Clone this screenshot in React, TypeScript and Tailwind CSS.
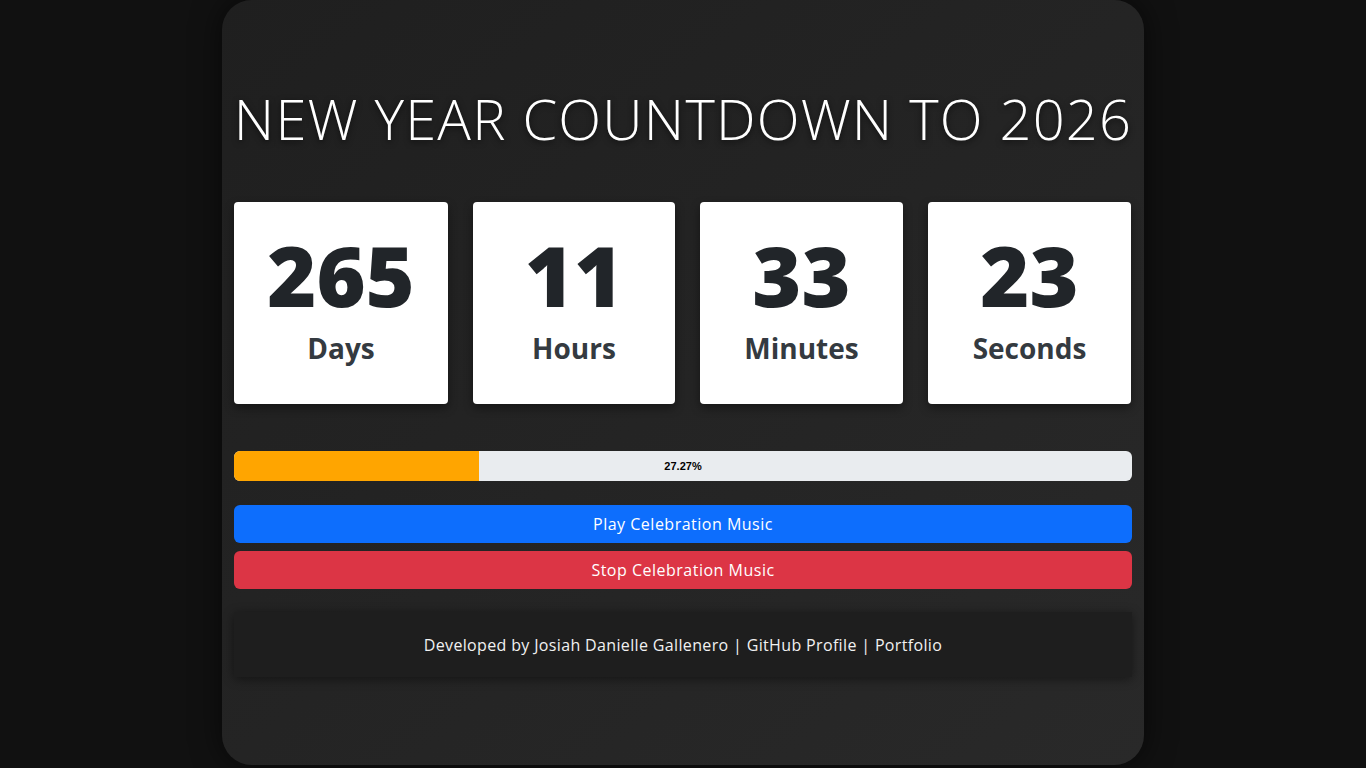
import React from 'react';

const units = [
  { value: '265', label: 'Days', w: 'w-[214px]' },
  { value: '11', label: 'Hours', w: 'w-[202px]' },
  { value: '33', label: 'Minutes', w: 'w-[203px]' },
  { value: '23', label: 'Seconds', w: 'w-[203px]' },
];

const App = () => {
  const progress = 27.27;

  return (
    <div className="min-h-screen bg-[#111111] flex justify-center font-['Open_Sans',sans-serif]">
      <div className="w-[922px] h-[765px] rounded-[30px] bg-gradient-to-br from-[#1f1f1f] to-[#292929] shadow-[0_0_30px_rgba(0,0,0,0.6)] px-3 flex flex-col">
        {/* Title */}
        <h1 className="mt-[82px] h-[72px] flex items-center justify-center text-white text-[56px] font-light tracking-[1.2px] [text-shadow:0_2px_6px_rgba(0,0,0,0.6)] whitespace-nowrap">
          NEW YEAR COUNTDOWN TO 2026
        </h1>

        {/* Countdown boxes */}
        <div className="mt-[48px] flex gap-[25px] pr-[1px]">
          {units.map((u) => (
            <div
              key={u.label}
              className={`${u.w} h-[202px] bg-white rounded-[4px] shadow-[0_4px_10px_rgba(0,0,0,0.4)] flex flex-col items-center pt-[16px]`}
            >
              <div className="text-[84px] leading-[1.36] font-extrabold text-[#212529]">{u.value}</div>
              <div className="text-[28px] leading-[1.2] font-bold text-[#343a40]">{u.label}</div>
            </div>
          ))}
        </div>

        {/* Progress */}
        <div className="mt-[47px] relative h-[30px] bg-[#e9ecef] rounded-[6px] overflow-hidden">
          <div className="h-full bg-[#ffa500]" style={{ width: `${progress}%` }} />
          <div className="absolute inset-0 flex items-center justify-center text-[11px] font-bold text-black font-['Liberation_Sans',sans-serif]">
            {progress}%
          </div>
        </div>

        {/* Buttons */}
        <button className="mt-[24px] h-[38px] w-full rounded-[6px] bg-[#0d6efd] text-white text-[16px] tracking-[0.5px]">
          Play Celebration Music
        </button>
        <button className="mt-[8px] h-[38px] w-full rounded-[6px] bg-[#dc3545] text-white text-[16px] tracking-[0.5px]">
          Stop Celebration Music
        </button>

        {/* Footer */}
        <footer className="mt-[23px] h-[65px] bg-[#1e1e1e] shadow-[0_2px_10px_rgba(0,0,0,0.45)] flex items-center justify-center text-[#f1f1f1] text-[16px] tracking-[0.35px]">
          Developed by Josiah Danielle Gallenero | GitHub Profile | Portfolio
        </footer>
      </div>
    </div>
  );
};

export default App;
